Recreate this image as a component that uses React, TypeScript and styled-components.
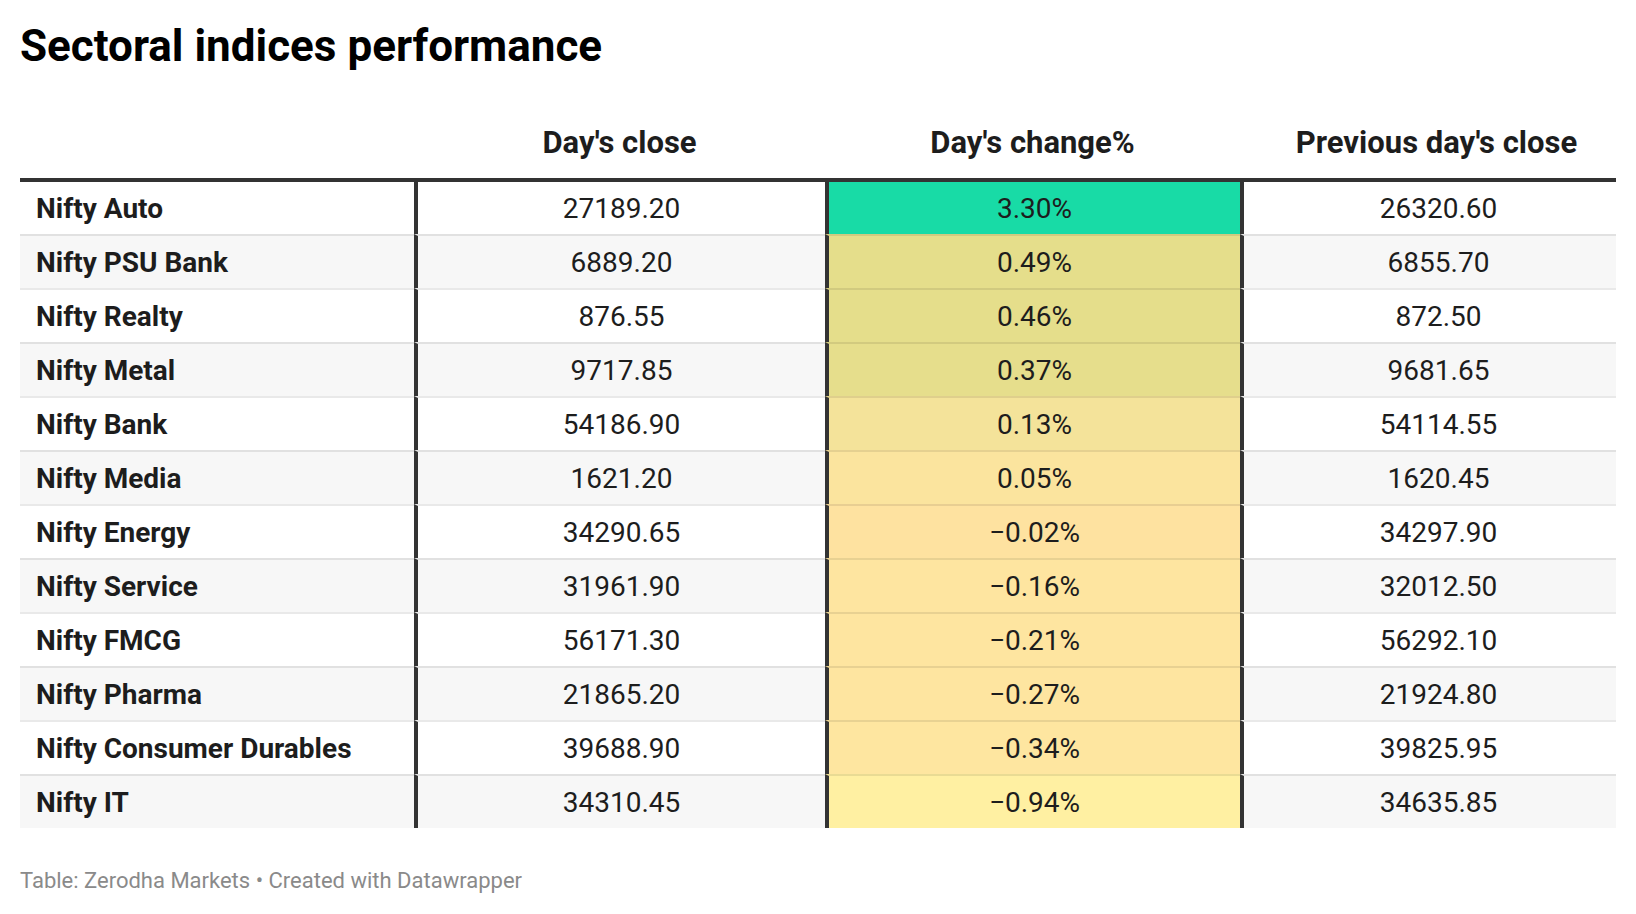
import React from "react";
import styled, { createGlobalStyle } from "styled-components";

const GlobalStyle = createGlobalStyle`
  html, body {
    margin: 0;
    padding: 0;
    background: #ffffff;
  }
  body {
    font-family: Roboto, "Liberation Sans", Arial, sans-serif;
    color: #1d1d1d;
  }
`;

interface RowData {
  name: string;
  close: string;
  change: string;
  prev: string;
  color: string;
}

const rows: RowData[] = [
  { name: "Nifty Auto", close: "27189.20", change: "3.30%", prev: "26320.60", color: "#18dba6" },
  { name: "Nifty PSU Bank", close: "6889.20", change: "0.49%", prev: "6855.70", color: "#e5de8b" },
  { name: "Nifty Realty", close: "876.55", change: "0.46%", prev: "872.50", color: "#e5de8b" },
  { name: "Nifty Metal", close: "9717.85", change: "0.37%", prev: "9681.65", color: "#e6de8c" },
  { name: "Nifty Bank", close: "54186.90", change: "0.13%", prev: "54114.55", color: "#f4e39a" },
  { name: "Nifty Media", close: "1621.20", change: "0.05%", prev: "1620.45", color: "#fbe49e" },
  { name: "Nifty Energy", close: "34290.65", change: "\u22120.02%", prev: "34297.90", color: "#fee2a0" },
  { name: "Nifty Service", close: "31961.90", change: "\u22120.16%", prev: "32012.50", color: "#fee5a0" },
  { name: "Nifty FMCG", close: "56171.30", change: "\u22120.21%", prev: "56292.10", color: "#fee5a0" },
  { name: "Nifty Pharma", close: "21865.20", change: "\u22120.27%", prev: "21924.80", color: "#fee5a0" },
  { name: "Nifty Consumer Durables", close: "39688.90", change: "\u22120.34%", prev: "39825.95", color: "#fee6a0" },
  { name: "Nifty IT", close: "34310.45", change: "\u22120.94%", prev: "34635.85", color: "#fff0a2" },
];

const Page = styled.div`
  padding: 20px 20px 0 20px;
`;

const Title = styled.h1`
  margin: 0;
  font-size: 44px;
  line-height: 53px;
  font-weight: 700;
  color: #000;
`;

const Table = styled.div`
  margin-top: 52px;
  width: 1596px;
`;

const columns = "394px 411px 415px 376px";

const HeadRow = styled.div`
  display: grid;
  grid-template-columns: ${columns};
  border-bottom: 4px solid #333;
  padding-bottom: 17px;
`;

const HeadCell = styled.div<{ $last?: boolean }>`
  font-size: 31px;
  line-height: 36px;
  font-weight: 700;
  text-align: center;
  color: #1d1d1d;
  padding-left: ${(p) => (p.$last ? "17px" : "0")};
`;

const BodyRow = styled.div<{ $striped: boolean }>`
  display: grid;
  grid-template-columns: ${columns};
  background: ${(p) => (p.$striped ? "#f7f7f7" : "#ffffff")};
`;

const Cell = styled.div<{ $first: boolean; $divider: boolean; $last?: boolean; $bg?: string }>`
  height: 52px;
  display: flex;
  align-items: center;
  justify-content: center;
  font-size: 28px;
  color: #1d1d1d;
  padding-left: ${(p) => (p.$last ? "17px" : "0")};
  border-top: ${(p) => (p.$first ? "none" : "2px solid rgba(0, 0, 0, 0.085)")};
  border-left: ${(p) => (p.$divider ? "4px solid #333" : "none")};
  background: ${(p) => p.$bg || "transparent"};
`;

const NameCell = styled(Cell)`
  justify-content: flex-start;
  padding-left: 16px;
  font-weight: 700;
`;

const Footer = styled.div`
  margin-top: 40px;
  font-size: 22px;
  line-height: 26px;
  color: #8a8a8a;
`;

export default function App() {
  return (
    <>
      <GlobalStyle />
      <Page>
        <Title>Sectoral indices performance</Title>
        <Table>
          <HeadRow>
            <HeadCell />
            <HeadCell>Day's close</HeadCell>
            <HeadCell>Day's change%</HeadCell>
            <HeadCell $last>Previous day's close</HeadCell>
          </HeadRow>
          {rows.map((r, i) => (
            <BodyRow key={r.name} $striped={i % 2 === 1}>
              <NameCell $first={i === 0} $divider={false}>
                {r.name}
              </NameCell>
              <Cell $first={i === 0} $divider>
                {r.close}
              </Cell>
              <Cell $first={i === 0} $divider $bg={r.color}>
                {r.change}
              </Cell>
              <Cell $first={i === 0} $divider $last>
                {r.prev}
              </Cell>
            </BodyRow>
          ))}
        </Table>
        <Footer>Table: Zerodha Markets • Created with Datawrapper</Footer>
      </Page>
    </>
  );
}
